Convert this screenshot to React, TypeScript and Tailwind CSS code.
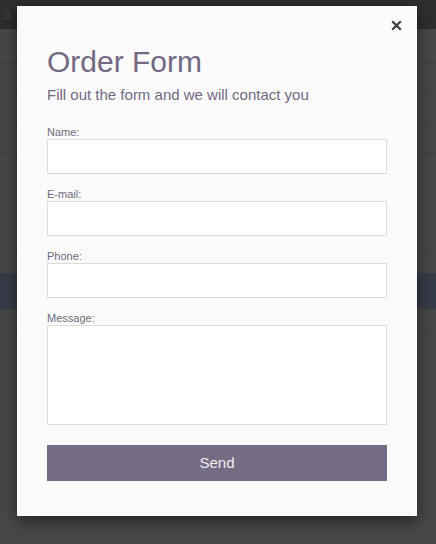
import React from "react";

const Field = ({ label, tall }: { label: string; tall?: boolean }) => (
  <div className="flex flex-col">
    <label className="text-[11px] leading-[13px] text-[#6f6a7a]">{label}</label>
    {tall ? (
      <textarea className="h-[100px] w-full resize-none border border-[#dcdcdc] bg-white outline-none" />
    ) : (
      <input className="h-[35px] w-full border border-[#dcdcdc] bg-white outline-none" />
    )}
  </div>
);

export default function App() {
  return (
    <div className="relative h-[544px] w-[436px] overflow-hidden bg-[#474747] font-['Liberation_Sans',Arial,sans-serif]">
      {/* dimmed page behind */}
      <div className="flex h-[29px] items-center bg-[#2d2f2e] pl-[3px] text-[13px] text-[#434544]">3</div>
      <div className="h-[35px] border-b border-[#3f3f3f]" />
      <div className="h-[27px] border-b border-[#3f3f3f]" />
      <div className="h-[35px] border-b border-[#3f3f3f]" />
      <div className="h-[28px] border-b border-[#3f3f3f]" />
      <div className="h-[98px] border-b border-[#3f3f3f]" />
      <div className="h-[21px]" />
      <div className="h-[36px] bg-[#363c47]" />
      <div className="h-[25px] border-b border-[#3f3f3f]" />

      {/* modal */}
      <div className="absolute left-[17px] top-[6px] w-[400px] bg-[#fafafa] px-[30px] pb-[35px] pt-[39px] shadow-[0_5px_15px_rgba(0,0,0,0.5)]">
        <button className="absolute right-[15px] top-[14px] flex h-[11px] w-[11px] items-center justify-center">
          <svg width="11" height="11" viewBox="0 0 11 11">
            <path d="M1.2 1.2 L9.8 9.8 M9.8 1.2 L1.2 9.8" stroke="#3d3d3d" strokeWidth="2.3" />
          </svg>
        </button>
        <h1 className="text-[30px] leading-[33px] text-[#736982]">Order Form</h1>
        <p className="mt-[7px] text-[15px] leading-[20px] text-[#736982]">Fill out the form and we will contact you</p>
        <div className="mt-[21px] flex flex-col gap-[14px]">
          <Field label="Name:" />
          <Field label="E-mail:" />
          <Field label="Phone:" />
          <Field label="Message:" tall />
        </div>
        <button className="mt-[20px] flex h-[36px] w-full items-center justify-center bg-[#766b84] text-[15px] text-[#f0eef2]">
          Send
        </button>
      </div>
    </div>
  );
}
